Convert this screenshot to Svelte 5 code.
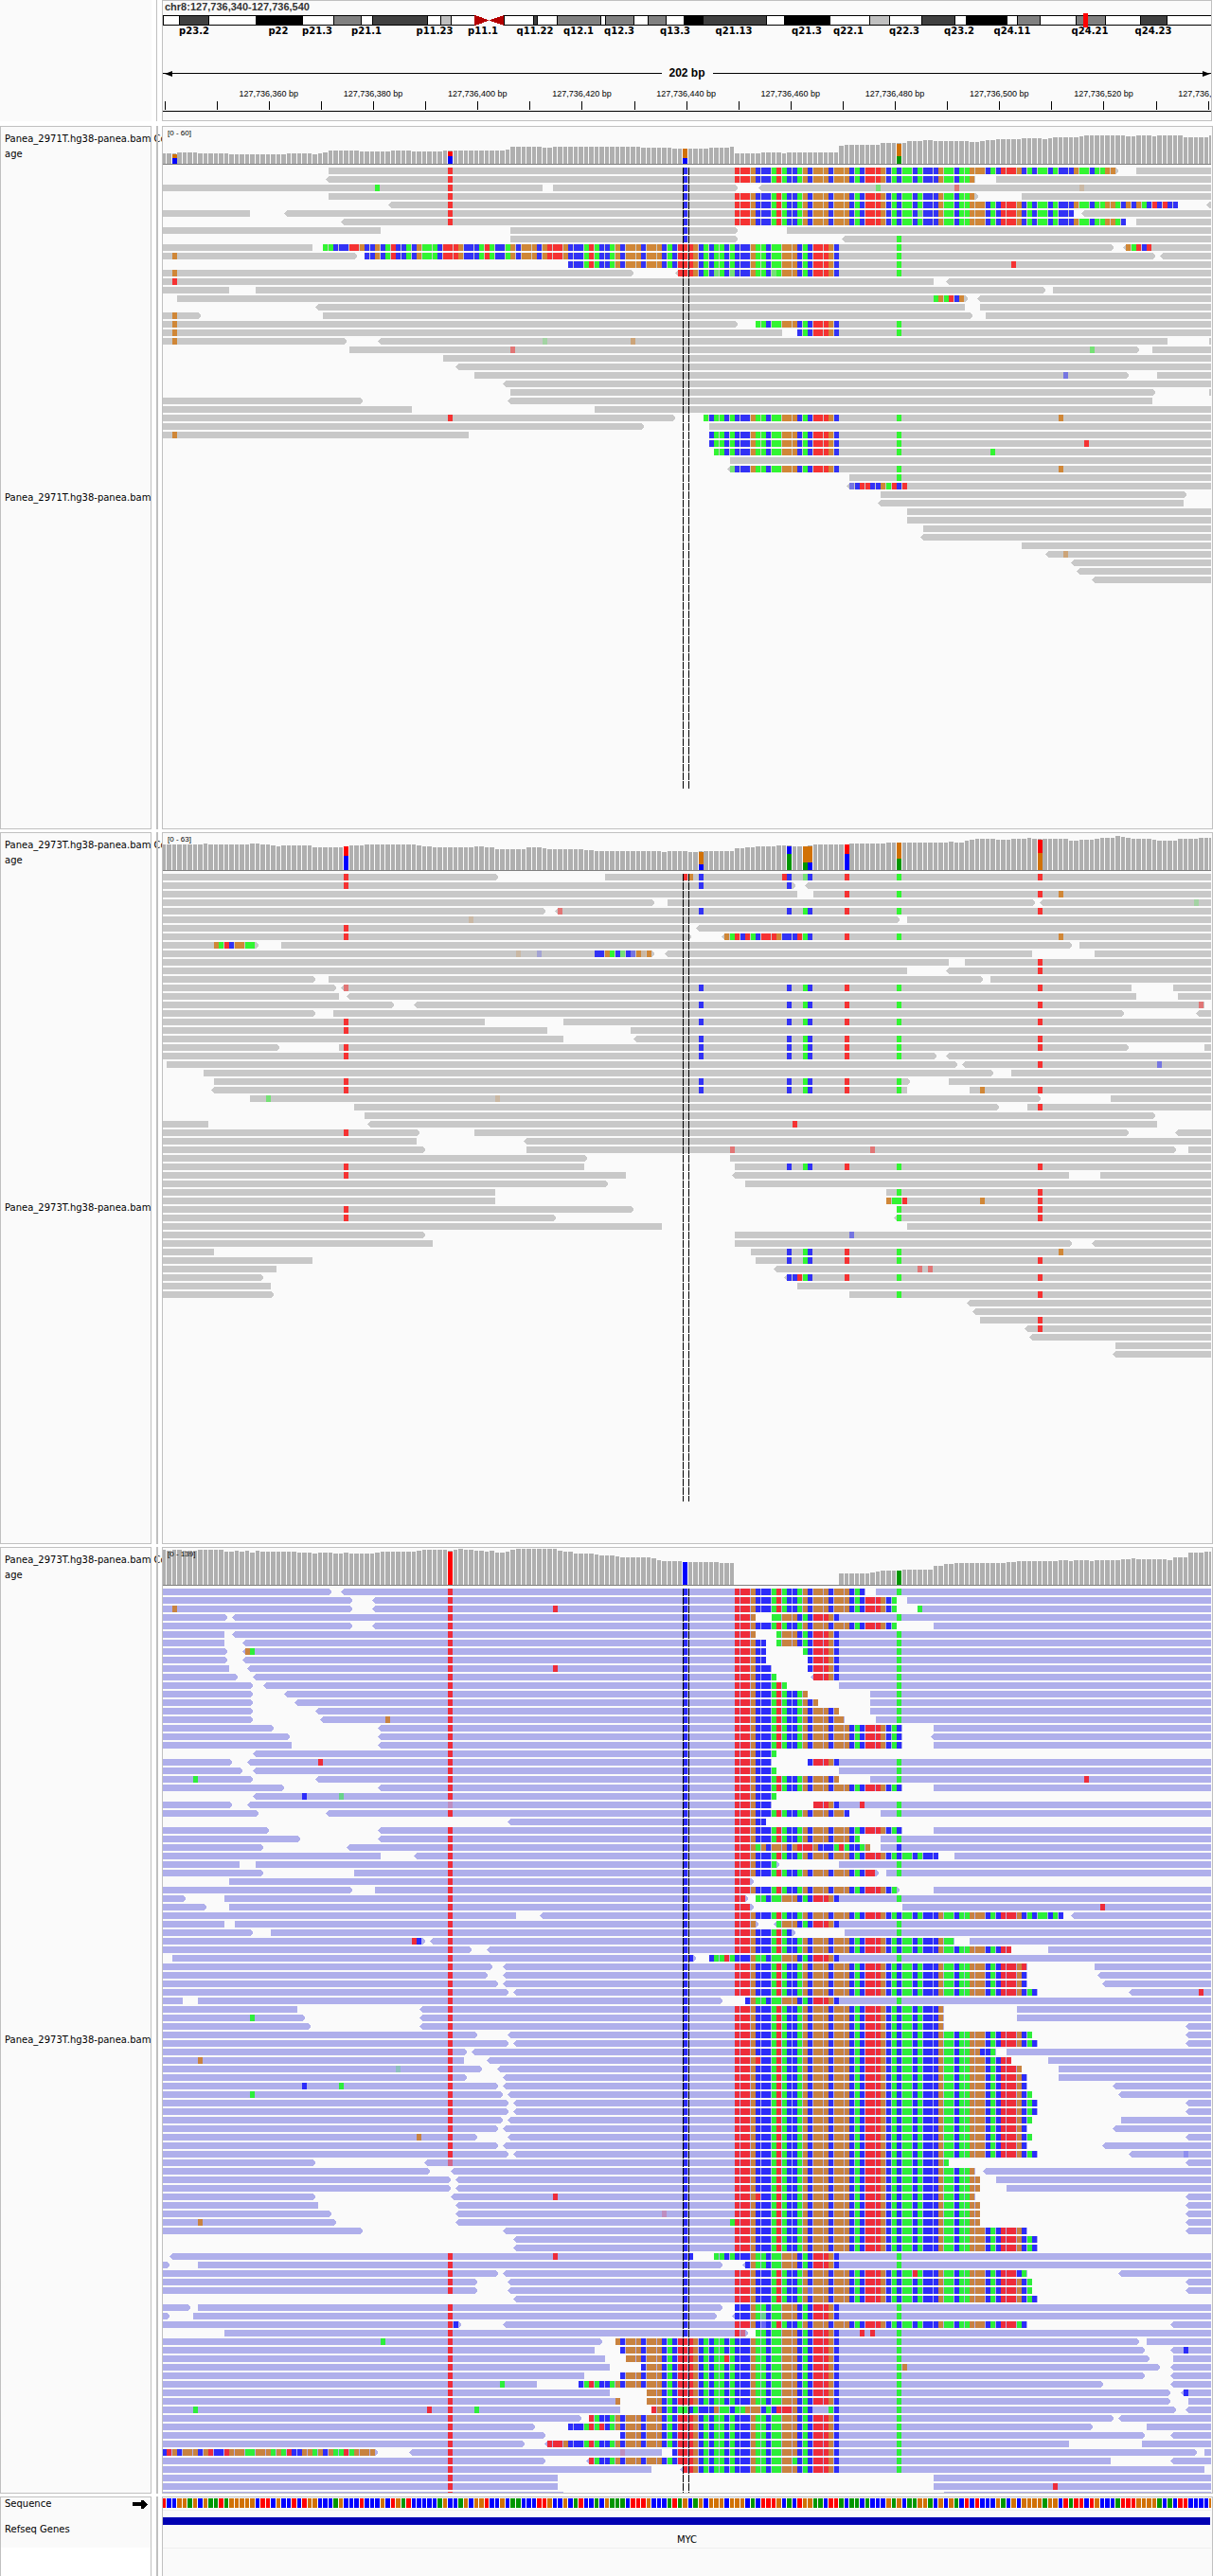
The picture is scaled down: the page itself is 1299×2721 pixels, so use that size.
<script>
  const SPAN = 202;
  const VIEW = 1107;
  const BASES = ['A', 'C', 'G', 'T'];

  // Left pixel of a base column inside the data panel.
  const px = (b) => Math.floor(5.507 * b - 0.97);

  const bands = [
    [0, 17, 'w'], [17, 48, 'd'], [48, 98, 'w'], [98, 147, 'k'], [147, 180, 'w'], [180, 209, 'm'],
    [209, 221, 'w'], [221, 279, 'd'], [279, 293, 'w'], [293, 304, 'l'], [304, 329, 'w'],
    [360, 391, 'w'], [391, 395, 'd'], [395, 416, 'w'], [416, 462, 'm'], [462, 467, 'w'],
    [467, 497, 'm'], [497, 512, 'w'], [512, 531, 'm'], [531, 550, 'w'], [550, 570, 'k'],
    [570, 637, 'd'], [637, 656, 'w'], [656, 704, 'k'], [704, 746, 'w'], [746, 767, 'l'],
    [767, 801, 'w'], [801, 836, 'd'], [836, 848, 'w'], [848, 891, 'k'], [891, 902, 'w'],
    [902, 926, 'm'], [926, 964, 'w'], [964, 995, 'm'], [995, 1032, 'w'], [1032, 1060, 'd'],
    [1060, 1107, 'w']
  ];
  const bandFill = { w: '#ffffff', l: '#c0c0c0', m: '#808080', d: '#404040', k: '#000000' };
  const bandNames = [
    ['p23.2', 33], ['p22', 122], ['p21.3', 163], ['p21.1', 215], ['p11.23', 287], ['p11.1', 338],
    ['q11.22', 393], ['q12.1', 439], ['q12.3', 482], ['q13.3', 541], ['q21.13', 603], ['q21.3', 680],
    ['q22.1', 724], ['q22.3', 783], ['q23.2', 841], ['q24.11', 897], ['q24.21', 979], ['q24.23', 1046]
  ];

  const ticks = Array.from({ length: 21 }, (_, i) => Math.round(5.51 * 10 * i + 1.65));
  const rulerLabels = Array.from({ length: 10 }, (_, i) => ({
    text: `127,736,${360 + i * 20} bp`,
    at: ((5.51 * 20 * (i + 1) + 1.65) / VIEW) * 100
  }));

  const CLIPS = {
    R: [110, 'TTTGCCCATACCAGCGGGCGGGCACTTTGCACAACACCCGAACAAGGGCACTTTGCACAACACCCGAACAAGGACGCGACTCTCC'],
    L: [31, 'AACCCTTGCCGCATCCACGAAACTTTGCCCATACCAGCGGGCGTTTGCCCATACCAGCGGGCGGGCACTTTGCACAACACCCGAACAAGGGCACTTTGC']
  };
  const PRESETS = { V: 'T55 C100', W: 'C103 C120 A123 C124 T131 A141 T168' };

  // Row tokens: "a-b" read, "<"/">" strand tip, "T55" mismatch (lower case: low quality,
  // "~": lowest quality), "R110-183" clipped run taken from CLIPS, "@10GAT" literal run.
  function buildReads(source) {
    const d = { read: '' };
    for (const base of BASES) {
      const low = base.toLowerCase();
      d[base] = d[low] = d['~' + low] = '';
    }
    source.trim().split('\n').forEach((line, row) => {
      const y = 3 + row * 9;
      const marks = new Map();
      const tokens = line.trim().split(/\s+/).flatMap((t) => (PRESETS[t] ? PRESETS[t].split(' ') : [t]));
      for (const t of tokens) {
        let m;
        if ((m = t.match(/^(<?)(\d+)-(\d*)(>?)$/))) {
          const x0 = px(+m[2]);
          const x1 = px(m[3] ? +m[3] : SPAN);
          d.read += `M${x0} ${y}H${x1}${m[4] ? `l3 3v1l-3 3` : `v7`}H${x0}${m[1] ? 'l-3 -3v-1z' : 'z'}`;
        } else if ((m = t.match(/^([RL])(\d+)-(\d+)$/))) {
          const [origin, seq] = CLIPS[m[1]];
          for (let b = +m[2]; b < +m[3]; b++) marks.set(b, seq[b - origin]);
        } else if ((m = t.match(/^@(\d+)([ACGT]+)$/))) {
          [...m[2]].forEach((ch, i) => marks.set(+m[1] + i, ch));
        } else if ((m = t.match(/^([ACGT]|~?[acgt])(\d+)$/))) {
          marks.set(+m[2], m[1]);
        }
      }
      for (const [b, ch] of marks) d[ch] += `M${px(b)} ${y}h5v7h-5z`;
    });
    return d;
  }

  function buildCoverage(steps, stacks) {
    const d = { gray: '', A: '', C: '', G: '', T: '' };
    const heights = [];
    for (const step of steps.split(' ')) {
      const [from, h] = step.split(':').map(Number);
      for (let b = from; b < SPAN; b++) heights[b] = h;
    }
    heights.forEach((h, b) => {
      if (h) d.gray += `M${px(b)} 38h${px(b + 1) - px(b) - 1}v${-h}h${1 + px(b) - px(b + 1)}z`;
    });
    for (const [b, parts] of Object.entries(stacks)) {
      let y = 38;
      for (const [ch, h] of parts) {
        d[ch] += `M${px(+b)} ${y}h5v${-h}h-5z`;
        y -= h;
      }
    }
    return d;
  }

  const tracks = [
    {
      id: 'a', name: 'Panea_2971T.hg38-panea.bam', range: '[0 - 60]', height: 701, guide: 659, tone: 'plain',
      coverage: buildCoverage(
        '0:11 3:12 7:11 13:10 24:11 29:10 30:11 31:12 32:14 38:13 44:14 48:13 54:14 66:15 67:18 73:17 75:18 92:17 98:16 105:17 109:18 110:11 115:12 119:11 120:12 130:19 131:20 138:22 143:24 146:25 148:24 155:23 157:24 158:25 160:26 165:27 169:26 170:27 171:28 176:29 177:30 185:29 187:30 190:29 191:30 196:28 201:30',
        { 2: [['C', 6], ['G', 4]], 55: [['C', 8], ['T', 5]], 100: [['C', 6], ['G', 10]], 141: [['A', 8], ['G', 13]] }
      ),
      reads: buildReads(`
        32-183> 187- V R110-183
        <32-156 160- V R110-156
        0-73 75-110> <115- V A41 a137 t152 ~g176
        32-156> 165- V R110-156
        <44-195 <201- V R110-195
        0-17 <24-175 <177- V R110-175 a145
        <35-185 187- V R110-185
        0-42 67-110> 120- C100
        67-110> <131- C100 A141
        0-29 31-182> <185- L31-130 A141 @185GATCT
        0-37> 39-190> <192- G2 L39-130 A141
        78- L78-130 A141 T163
        0-90> <99- G2 L99-130 a106 a109 a117 A141
        0-148 <151- T2
        0-13 18-169> 171-
        3-154> <157- @148AGATCG
        <30-154 157-
        0-7> 31-155> 158- G2
        0-110> 114- L114-130 G2 A141
        0-119 122- L122-130 G2 A141
        0-35> <42-193 201- G2 ~a73 g90
        36-187> 190- t67 a178
        54-
        <57-
        60-185> 191- c173
        <66-
        67-190> 201-
        0-38> <67-190
        0-48 83-
        0-98> 104- T55 L104-130 A141 G172
        0-92> 105-
        0-59 105- G2 L105-130 A141
        105- L105-130 A141 T177
        106- L106-130 A141 A159
        109-
        <109- a109 L110-130 A141 G172
        132- A141
        <132- c132 @133CTTCCGATCT
        138-196>
        <138-196
        143-
        143-
        146-
        <146-
        165-
        <170- g173
        <175-
        <176-
        <179-`)
    },
    {
      id: 'b', name: 'Panea_2973T.hg38-panea.bam', range: '[0 - 63]', height: 710, guide: 666, tone: 'plain',
      coverage: buildCoverage(
        '0:27 8:28 9:27 17:28 19:27 21:26 22:25 23:26 29:24 36:26 39:27 49:26 50:25 52:24 60:25 62:24 64:22 70:24 73:23 74:22 81:21 83:20 96:19 97:20 101:19 103:20 110:23 112:24 114:25 118:26 121:25 124:26 125:27 132:28 139:29 151:30 152:29 154:31 155:32 156:33 160:32 163:33 166:34 167:33 174:31 176:32 179:33 180:34 183:36 184:35 185:34 186:33 190:32 191:31 195:33 199:34',
        {
          35: [['C', 15], ['T', 10]], 103: [['C', 6], ['G', 13]], 120: [['A', 17], ['C', 8]],
          123: [['A', 8], ['G', 17]], 124: [['C', 8], ['G', 17]], 131: [['C', 17], ['T', 10]],
          141: [['A', 12], ['G', 17]], 168: [['G', 18], ['T', 14]]
        }
      ),
      reads: buildReads(`
        0-64> 85- T35 W T100 G101 T119 a123
        0-121> <124- T35 C103 C120
        0-122 125- T131 A141 T168 G172
        0-94> 97-167> <169- ~a198
        0-73> <76- t76 W
        0-141> 143- ~g59
        0-101 <103- T35
        0-101> <108- T35 @108GATCTACTTTGCCCTAC T131 A141 G172
        0-18> 23-174> 176- @10GATCGGAA
        0-94> <97-167 179- ~g68 ~c72 @83CCGACACCGGG a88 c90 ~g92
        0-151 154- T168
        0-143 <151- T168
        0-29> 32-157> 159-
        0-33> <35-186 194- t35 W
        0-34 <36-187 195-
        0-44> <49-200 W t199
        0-29> 33-184> <199-
        0-62 77- T35 W
        0-74 90- T35
        0-77 <91- W
        0-22> 34-185> 200- T35 W
        0-148> <151- T35 C103 C120 A123 C124 T131 A141
        1-152> <154- T168 c191
        8-159> 163-
        10-143> 151- T35 C103 C120 A123 C124 T131 A141
        <10-143 155- T35 W G157
        17-168> 182- a20 ~g64
        37-160> 166- T168
        39-190>
        0-9 <40-191 T121
        0-49> 60-185> <195- T35
        0-49 <70-
        0-50> 70-194> 197- t109 t136
        0-81> 109-
        0-81 110- T35 C120 A123 C124 T131 A141 T168
        0-89 <110-174 180- T35
        0-85> 112-
        0-64 139- A141 T168
        0-64 139- @139GAAT G157 T168
        0-90> 141- T35 A141 T168
        0-75> <141- T35 A141 T168
        0-96 143-
        0-50> 110- c132
        0-52 110-174> <179-
        0-10 113- C120 A123 C124 T131 A141 G172
        0-29 114- C120 A123 C124 T131 A141 T168
        0-22 <118- t145 t147
        0-19> <120- C120 C121 T122 A123 C124 T131 A141 T168
        0-21 122-
        0-21> 132- A141 T168
        <155-
        <156-
        157- T168
        <166- T168
        <167-
        183-
        <183-`)
    },
    {
      id: 'c', name: 'Panea_2973T.hg38-panea.bam', range: '[0 - 139]', height: 958, guide: 958, tone: 'strand',
      coverage: buildCoverage(
        '0:37 1:36 2:37 4:36 7:37 12:35 14:36 15:35 16:36 17:34 18:36 19:35 26:34 29:33 30:34 33:33 35:34 36:33 41:34 42:35 49:36 50:37 55:36 56:37 57:38 58:37 60:36 62:35 63:36 64:34 66:35 67:37 68:38 76:36 77:35 79:33 83:32 84:31 87:30 88:29 94:28 95:26 96:25 100:24 107:23 110:0 130:12 136:13 137:14 138:15 142:16 148:20 150:22 152:23 162:24 164:25 172:26 174:25 175:26 178:25 179:26 184:27 186:28 187:27 193:26 194:29 197:34 200:35',
        { 55: [['T', 35]], 100: [['C', 24]], 141: [['A', 15]] }
      ),
      reads: buildReads(`
        0-32> <35-135 137- V R110-135 A141
        0-36> <41-141 143- V R110-141
        0-36> <41-141 145- V G2 T75 R110-141 A145
        0-12> <14-114 117- V R110-114 L117-130 A141
        0-36> <41-141 148- V R110-141
        0-12 <14-114 118- V R110-114 L118-130 A141
        0-12 <16-116 118- V R110-116 L118-130 A141
        0-12> <16-116 123- V G16 A17 R110-116 L123-130 A141
        0-12> <16-116 124- V R110-116 L124-130 A141
        0-13 <17-117 124- V T75 R110-117 L124-130 A141
        0-14> <18-118 <125- V R110-118 L125-130 A141
        0-17> <20-120 130- V R110-120 A141
        0-17> <24-124 136- V R110-124 A141
        0-17> <26-126 136- V R110-126 A141
        0-17> <30-130 136- V R110-130 A141
        0-17> <31-131 137- V G43 R110-131 A141
        0-21> <42-142 148- V R110-142
        0-24> <42-142 <148- V R110-142
        0-25 <42-142 148- V R110-142
        <18-118 V R110-118
        0-13> <17-117 124- V T30 R110-117 L124-130 A141
        0-15> <18-118 130- V R110-118 A141
        0-17> <30-130 136- V A6 R110-130 A141 T177
        0-23> <42-142 148- V R110-142
        <18-118 V C27 a34 R110-118
        0-13> <17-117 125- ~t55 C100 R110-117 L125-130 T134 A141
        0-18> <32-132 138- V R110-131 C131 A141
        <67-116 C100 R110-116
        0-20> <42-142 148- V R110-142
        0-26> <42-134 138- V R110-134 A141
        0-19> <36-136 138- V @110TTTGAGCGGGCGTTTGCCCATACCAG C141
        0-42 <49-149 152- V R110-149
        0-15 18-118> 130- V R110-118 A141
        0-19> 37-137> 139- V R110-137 A141
        13-113> V R110-113
        0-36> 41-141> 148- V R110-141
        0-4> 12-112> 114- V R110-112 L114-130 A141
        0-8> 13-113> 142- V R110-113 T180
        0-68 <73-173 <175- V R110-173
        0-12 14-114> <118- V R110-114 L118-130 A141
        0-17> 21-121> 131- V R110-121 A141
        0-50> <52-152 155- V T48 C49 R110-152
        0-59> <63-163 170- V R110-163
        2-102> 105- V C101 @105CAATA L110-130 A141
        0-63> <66-166 179- V R110-165 T165
        0-62> <66-166 <180- V R110-166
        0-64> <66-166 <181- V R110-166
        0-66> <68-168 <186- V R110-168 T199
        0-4 7-107> 112- V C112 L113-130 A141
        0-26 <50-150 164- V R110-150
        0-27> <50-150 164- V A17 R110-150
        0-28> <50-150 <197- V R110-150
        0-60> <67-167 <197- V R110-167
        0-66> <68-168 <197- V R110-168
        0-58> <60-160 162- V R110-160 C157
        0-58 <63-163 170- V G7 R110-163 T114
        0-61> <65-165 172- V ~a45 R110-165
        0-58> <66-166 172- V R110-166
        0-64> <66-166 <183- V C27 A34 R110-166
        0-65> <67-167 <184- V A17 R110-167
        0-66> <68-168 <197- V R110-168
        0-66> <68-168 <197- V R110-168
        0-65> <67-167 184- V R110-167
        0-64> <66-166 <183- V R110-166
        0-60> <67-167 <197- V G49 R110-167
        0-64> <66-166 <181- V R110-166
        0-66> <68-168 <186- V R110-168 ~c196
        0-29> <51-151 <197- t55 C100 R110-151
        0-51> <56-156 <158- C100 R110-156
        0-55> <57-157 160- C100 R110-157
        0-55> <57-157 162- C100 R110-157
        0-29> <56-156 <197- C100 T75 R110-156 T114
        0-30 <57-157 <197- C100 R110-157
        0-32> <57-157 <197- C100 ~t96 R110-157
        0-33> <57-157 <197- C100 G7 A109 R110-157
        0-38> <66-166 <197- C100 R110-166
        <68-168 C100 R110-168
        <68-168 C100 R110-168
        <2-102 106- V T75 C101 L106-130 A141
        0-1> 7-107> <112- V C112 L113-130 A141
        0-64> <66-166 <184- V R110-164 T144 C164 A165
        0-60> <67-167 <197- V R110-167
        0-60> <67-167 <197- V R110-167 c124
        <68-168 C100 R110-168
        0-5> 7-107> 110- V L110-130 A141
        0-1> 6-106> <110- V L110-130 a115 A141
        0-57> <66-166 <194- V C56 R110-164 c115 A164 C165
        12-112> 114- V T110 t111 L114-130 T134 T136 A141
        0-84> 87-187> 189- T55 A42 L87-130 A141
        0-83 88-188> <194- T55 L88-130 A141 C196
        0-85 89-189> 194- T55 L89-130 T108 A141
        0-86 92-191> <194- T55 L92-130 A141 G142
        0-81 88-188> <194- T55 L88-130 A141
        0-72 80-180> <194- T55 A65 C80 L81-130 A141
        0-86 93-193> <196- T55 L93-130 A141 C196
        0-88 93-193> 197- T55 G87 L93-130 A141
        0-88 94-194> <197- T55 A6 T51 A60 @94TGCACAACACCCGAACAAGGGCACTTTGCAC A128 C129 A141
        0-80> 82-182> <184- T55 L82-130 A141
        0-71> 78-178> 189- T55 L78-130 T84 A141
        0-73> 88-188> <194- T55 L88-130 A141
        0-69> <74-174 188- T55 L74-130 A141
        0-41> <48-96 98-198> 200- T55 @0CTGCGGGCGTCCTGGGAAGGGAGATCCGGAGCGAATAGGGG ~t88 L98-130 A141
        0-73> <82-182 <194- T55 L82-130 A121 A141
        0-94 <100-200 T55 L100-130 A141
        0-76 148- T55
        0-76 148- T55 T171
        0-77 150- T55`)
    }
  ];

  const genome =
    'TCCGGAGCGAATAGGGGGCTTCGCCTCTGGCCCAGCCCTCCCGCTGATCCCCCAGCCAGCGGTCCGCAACCCTTGCCGCATCCACGA' +
    'AACTTTGCCCATAGCAGCGGGCGGGCACTTTGCACTGGAACTTACAACACCCGAGCAAGGACGCGACTCTCCCGACGCGGGGAGGCTATTCTGCCCATTTGGGGACACTTCCCCG';
  const sequence = { A: '', C: '', G: '', T: '' };
  [...genome].forEach((ch, b) => {
    const w = px(b + 1) - px(b) - 1;
    sequence[ch] += `M${px(b)} 0h${w}v10h${-w}z`;
  });
</script>

<main class="browser">
  <header class="row head">
    <div class="corner"></div>
    <div class="divider"></div>
    <div class="locus">
      <h1>chr8:127,736,340-127,736,540</h1>
      <svg class="ideogram" viewBox="0 0 1107 15" preserveAspectRatio="none" aria-label="Chromosome 8">
        <rect x="0" y="2" width="329" height="11" />
        <rect x="360" y="2" width="747" height="11" />
        {#each bands as [from, to, kind]}
          <rect x={from + 1} y="3" width={to - from - 1} height="9" fill={bandFill[kind]} />
        {/each}
        <path class="centromere" d="M329 2L344 7V8L329 13ZM360 2L345 7V8L360 13Z" />
        <rect class="position" x="972" y="0" width="5" height="15" />
      </svg>
      <div class="band-names">
        {#each bandNames as [name, at]}
          <span style:left="{(at / VIEW) * 100}%">{name}</span>
        {/each}
      </div>
      <div class="extent"><i class="arrow left"></i><b>202 bp</b><i class="arrow right"></i></div>
      <div class="ruler-labels">
        {#each rulerLabels as label}
          <span style:left="{label.at}%">{label.text}</span>
        {/each}
      </div>
      <svg class="ruler" viewBox="0 0 1107 11" preserveAspectRatio="none" aria-hidden="true">
        {#each ticks as x}<rect {x} y="0" width="1" height="9" />{/each}
        <rect x="0" y="10" width="1107" height="1" />
      </svg>
    </div>
  </header>

  {#each tracks as track (track.id)}
    <section class="row">
      <div class="names">
        <p class="coverage-name">{track.name} Cover<br />age</p>
        <p class="reads-name">{track.name}</p>
      </div>
      <div class="divider"></div>
      <div class="data {track.tone}">
        <div class="coverage">
          <svg viewBox="0 0 1107 38" height="38" preserveAspectRatio="none" aria-label="Coverage">
            <path class="depth" d={track.coverage.gray} />
            {#each BASES as base}<path class="pure {base}" d={track.coverage[base]} />{/each}
          </svg>
          <span class="range">{track.range}</span>
        </div>
        <svg viewBox="0 0 1107 {track.height}" height={track.height} preserveAspectRatio="none" aria-label="Alignments">
          <path class="read" d={track.reads.read} />
          {#each BASES as base}
            <path class={base} d={track.reads[base]} />
            <path class="{base} faint" d={track.reads[base.toLowerCase()]} />
            <path class="{base} faintest" d={track.reads['~' + base.toLowerCase()]} />
          {/each}
          <path class="guide" d="M549.5 3V{track.guide}M555.5 3V{track.guide}" />
        </svg>
      </div>
    </section>
  {/each}

  <footer class="row last">
    <div class="names">
      <p class="sequence-name">
        Sequence
        <svg width="16" height="9" viewBox="0 0 16 9" aria-hidden="true"><path d="M0 2H9V0H11L16 4V5L11 9H9V6H0Z" /></svg>
      </p>
      <p class="gene-name">Refseq Genes</p>
      <div class="blank"></div>
    </div>
    <div class="divider"></div>
    <div class="data">
      <div class="sequence">
        <svg viewBox="0 0 1107 10" height="10" preserveAspectRatio="none" aria-label="Reference sequence">
          {#each BASES as base}<path class="pure {base}" d={sequence[base]} />{/each}
        </svg>
      </div>
      <div class="genes">
        <div class="gene"></div>
        <p>MYC</p>
      </div>
    </div>
  </footer>
</main>

<style>
  :global(body) {
    margin: 0;
    background: #ffffff;
  }
  .browser {
    display: flex;
    flex-direction: column;
    gap: 3px;
    padding-right: 18px;
    font: 10px/16px 'DejaVu Sans', sans-serif;
    color: #000000;
  }
  .row {
    display: grid;
    grid-template-columns: 161px 2px minmax(0, 1fr);
    column-gap: 4px;
  }
  .head {
    margin-bottom: 2px;
    padding-right: 1px;
  }
  .corner,
  .names {
    margin-right: 1px;
    background: #fafafa;
  }
  .divider {
    background: #c0c0c0;
  }
  .head .divider {
    width: 1px;
  }
  .locus {
    box-sizing: border-box;
    border: 1px solid #c0c0c0;
    background: #fafafa;
    padding-bottom: 9px;
  }
  h1 {
    margin: 0;
    padding-left: 2px;
    font: bold 11px/13px 'Liberation Sans', sans-serif;
    color: #333333;
  }
  svg {
    display: block;
    shape-rendering: crispEdges;
  }
  .ideogram {
    width: 100%;
    height: 15px;
  }
  .centromere {
    fill: #b40000;
  }
  .position {
    fill: #ff0000;
  }
  .band-names {
    position: relative;
    height: 41px;
    font-weight: bold;
    line-height: 8px;
  }
  .band-names span,
  .ruler-labels span {
    position: absolute;
    top: 0;
    transform: translateX(-50%);
    white-space: nowrap;
  }
  .extent {
    display: flex;
    align-items: center;
    gap: 8px;
    height: 14px;
    font: bold 12px/14px 'Liberation Sans', sans-serif;
  }
  .arrow {
    position: relative;
    flex: 1;
    height: 1px;
    background: #000000;
  }
  .arrow::before {
    content: '';
    position: absolute;
    top: -2px;
    border: solid transparent;
    border-width: 3px 0;
  }
  .arrow.left::before {
    left: 2px;
    border-right: 8px solid #000000;
  }
  .arrow.right::before {
    right: 1px;
    border-left: 8px solid #000000;
  }
  .ruler-labels {
    position: relative;
    height: 12px;
    margin: 9px 0 2px;
    overflow: hidden;
    font: 9px/12px 'Liberation Sans', sans-serif;
  }
  .ruler {
    width: 100%;
    height: 11px;
  }
  .names,
  .data {
    box-sizing: border-box;
    border: 1px solid #c0c0c0;
    background: #fafafa;
  }
  .names {
    display: flex;
    flex-direction: column;
  }
  .names p {
    margin: 0;
    padding-left: 4px;
    white-space: nowrap;
  }
  .names .coverage-name {
    box-sizing: border-box;
    width: 170px;
    height: 40px;
    padding-top: 5px;
    overflow: hidden;
  }
  .names .reads-name {
    display: flex;
    flex: 1;
    align-items: center;
    padding-top: 2px;
  }
  .data {
    min-width: 0;
    padding-right: 1px;
  }
  .data svg {
    width: 100%;
  }
  .coverage {
    position: relative;
    padding-top: 1px;
    border-bottom: 1px solid #808080;
  }
  .range {
    position: absolute;
    top: 2px;
    left: 5px;
    font: 8px/10px 'Liberation Sans', sans-serif;
  }
  .depth {
    fill: #afafaf;
  }
  .read {
    fill: #c8c8c8;
  }
  .A {
    fill: #32f532;
  }
  .C {
    fill: #3232f5;
  }
  .G {
    fill: #d08737;
  }
  .T {
    fill: #f53232;
  }
  .strand .read {
    fill: #afafeb;
  }
  .strand .A {
    fill: #2cee3a;
  }
  .strand .C {
    fill: #2c2cfa;
  }
  .strand .G {
    fill: #c88240;
  }
  .strand .T {
    fill: #ee2c3a;
  }
  .data .pure.A {
    fill: #009600;
  }
  .data .pure.C {
    fill: #0000ff;
  }
  .data .pure.G {
    fill: #d17105;
  }
  .data .pure.T {
    fill: #ff0000;
  }
  .faint {
    fill-opacity: 0.55;
  }
  .faintest {
    fill-opacity: 0.25;
  }
  .guide {
    stroke: #000000;
    stroke-width: 1px;
    stroke-dasharray: 8 1;
  }
  .last .names,
  .last .data {
    border-bottom: 0;
  }
  .names .sequence-name {
    display: flex;
    align-items: center;
    justify-content: space-between;
    height: 14px;
    padding-right: 3px;
    line-height: 14px;
  }
  .names .gene-name {
    height: 39px;
    line-height: 39px;
  }
  .blank {
    height: 30px;
    background: #ffffff;
  }
  .sequence {
    padding: 1px 0 2px;
    border-bottom: 1px solid #eeeeee;
  }
  .genes {
    padding-top: 7px;
    border-bottom: 1px solid #eeeeee;
  }
  .gene {
    height: 8px;
    margin-right: 1px;
    background: #0000b2;
  }
  .genes p {
    margin: 8px 0 0;
    text-align: center;
  }
</style>
